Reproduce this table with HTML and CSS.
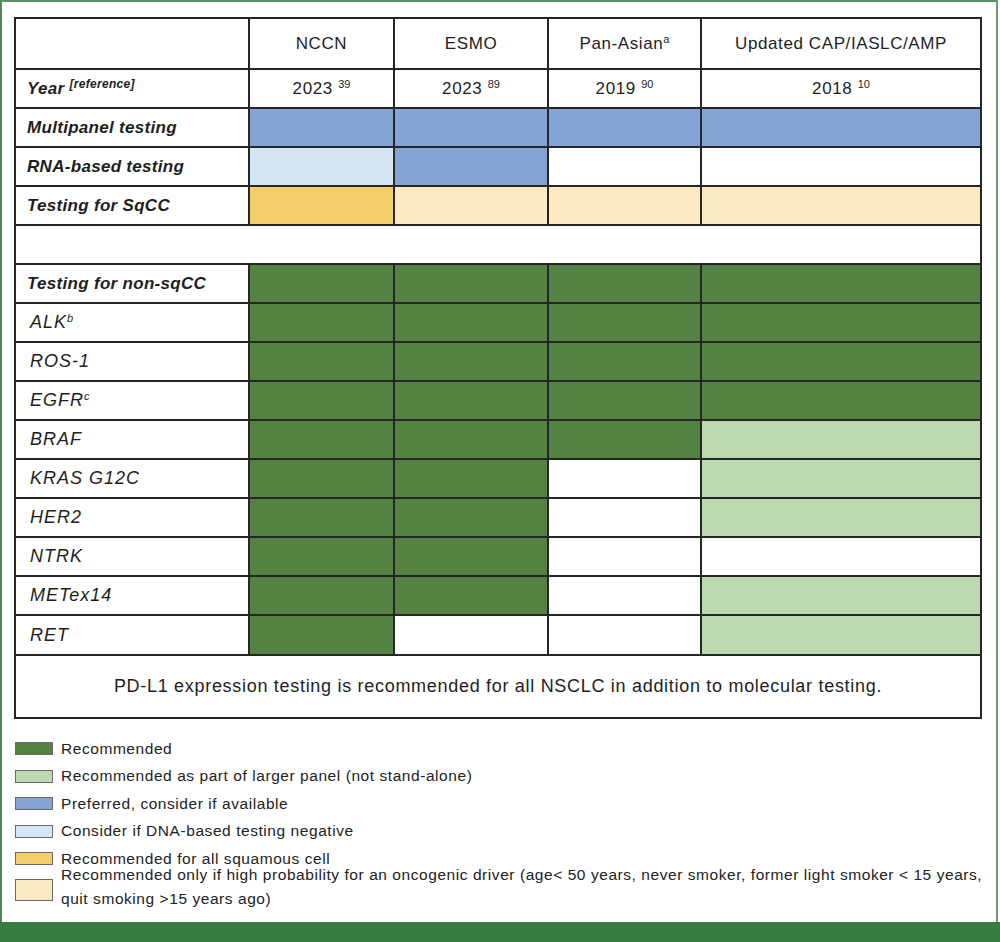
FILE: index.html
```html
<!DOCTYPE html>
<html>
<head>
<meta charset="utf-8">
<link rel="stylesheet" href="styles.css">
</head>
<body>
<div class="frame">
  <div class="content">
    <table class="grid">
      <colgroup>
        <col class="c1"><col class="c2"><col class="c3"><col class="c4"><col class="c5">
      </colgroup>
      <tr class="head">
        <td></td>
        <td class="hd">NCCN</td>
        <td class="hd">ESMO</td>
        <td class="hd">Pan-Asian<sup class="sa">a</sup></td>
        <td class="hd">Updated CAP/IASLC/AMP</td>
      </tr>
      <tr>
        <td class="lb">Year <sup class="ref">[reference]</sup></td>
        <td class="hd">2023 <sup class="yr">39</sup></td>
        <td class="hd">2023 <sup class="yr">89</sup></td>
        <td class="hd">2019 <sup class="yr">90</sup></td>
        <td class="hd">2018 <sup class="yr">10</sup></td>
      </tr>
      <tr>
        <td class="lb">Multipanel testing</td>
        <td class="bl"></td><td class="bl"></td><td class="bl"></td><td class="bl"></td>
      </tr>
      <tr>
        <td class="lb">RNA-based testing</td>
        <td class="lbl"></td><td class="bl"></td><td></td><td></td>
      </tr>
      <tr>
        <td class="lb">Testing for SqCC</td>
        <td class="gd"></td><td class="cr"></td><td class="cr"></td><td class="cr"></td>
      </tr>
      <tr>
        <td colspan="5"></td>
      </tr>
      <tr>
        <td class="lb">Testing for non-sqCC</td>
        <td class="dg"></td><td class="dg"></td><td class="dg"></td><td class="dg"></td>
      </tr>
      <tr>
        <td class="gn">ALK<sup class="gs">b</sup></td>
        <td class="dg"></td><td class="dg"></td><td class="dg"></td><td class="dg"></td>
      </tr>
      <tr>
        <td class="gn">ROS-1</td>
        <td class="dg"></td><td class="dg"></td><td class="dg"></td><td class="dg"></td>
      </tr>
      <tr>
        <td class="gn">EGFR<sup class="gs">c</sup></td>
        <td class="dg"></td><td class="dg"></td><td class="dg"></td><td class="dg"></td>
      </tr>
      <tr>
        <td class="gn">BRAF</td>
        <td class="dg"></td><td class="dg"></td><td class="dg"></td><td class="lg"></td>
      </tr>
      <tr>
        <td class="gn">KRAS G12C</td>
        <td class="dg"></td><td class="dg"></td><td></td><td class="lg"></td>
      </tr>
      <tr>
        <td class="gn">HER2</td>
        <td class="dg"></td><td class="dg"></td><td></td><td class="lg"></td>
      </tr>
      <tr>
        <td class="gn">NTRK</td>
        <td class="dg"></td><td class="dg"></td><td></td><td></td>
      </tr>
      <tr>
        <td class="gn">METex14</td>
        <td class="dg"></td><td class="dg"></td><td></td><td class="lg"></td>
      </tr>
      <tr class="last">
        <td class="gn">RET</td>
        <td class="dg"></td><td></td><td></td><td class="lg"></td>
      </tr>
      <tr class="note">
        <td colspan="5">PD-L1 expression testing is recommended for all NSCLC in addition to molecular testing.</td>
      </tr>
    </table>

    <ul class="legend">
      <li><span class="sw dg"></span><span class="lt">Recommended</span></li>
      <li><span class="sw lg"></span><span class="lt">Recommended as part of larger panel (not stand-alone)</span></li>
      <li><span class="sw bl"></span><span class="lt">Preferred, consider if available</span></li>
      <li><span class="sw lbl"></span><span class="lt">Consider if DNA-based testing negative</span></li>
      <li><span class="sw gd"></span><span class="lt">Recommended for all squamous cell</span></li>
      <li class="two"><span class="sw tall cr"></span><span class="lt">Recommended only if high probability for an oncogenic driver (age&lt; 50 years, never smoker, former light smoker &lt; 15 years,<br>quit smoking &gt;15 years ago)</span></li>
    </ul>
  </div>
  <div class="bar"></div>
</div>
</body>
</html>
```

FILE: styles.css
```css
html, body {
  margin: 0;
  padding: 0;
  background: #ffffff;
}

.frame {
  width: 1000px;
  height: 942px;
  box-sizing: border-box;
  display: flex;
  flex-direction: column;
}

.content {
  flex: 1;
  border-top: 2px solid #5a9160;
  border-left: 2px solid #4e8a55;
  border-right: 2px solid #6a9d6e;
  margin-right: 2px;
  padding: 15px 0 0 12px;
}

.grid {
  border-collapse: collapse;
  table-layout: fixed;
  width: 966px;
  font-family: "Liberation Sans", Arial, sans-serif;
  color: #1e1e1e;
}

.grid td {
  border: 2px solid #262626;
  height: 37px;
  padding: 0;
}

.c1 { width: 234px; }
.c2 { width: 145px; }
.c3 { width: 154px; }
.c4 { width: 153px; }
.c5 { width: 280px; }

.grid tr.head td { height: 49px; }
.grid tr.last td { height: 38px; }

.hd {
  text-align: center;
  font-size: 17px;
  letter-spacing: 0.6px;
}

.lb {
  font-weight: 700;
  font-style: italic;
  font-size: 17px;
  padding-left: 11px !important;
  letter-spacing: 0.3px;
}

.gn {
  font-style: italic;
  font-size: 18px;
  padding-left: 14px !important;
  letter-spacing: 1px;
}

sup {
  line-height: 0;
}

.sa { font-size: 11px; vertical-align: 6px; letter-spacing: 0; }
.yr { font-size: 11px; vertical-align: 6px; letter-spacing: 0; }
.ref { font-size: 12px; vertical-align: 6px; font-weight: 700; font-style: italic; letter-spacing: 0.3px; }
.gs { font-size: 11px; vertical-align: 6px; font-style: italic; letter-spacing: 0; }

.dg { background: #548242; }
.lg { background: #bcd9b1; }
.bl { background: #84a4d6; }
.lbl { background: #d6e5f2; }
.gd { background: #f2cf6a; }
.cr { background: #fbe9c1; }

.grid tr.note td {
  height: 61px;
  text-align: center;
  font-size: 18px;
  letter-spacing: 0.7px;
  color: #1e1e1e;
}

.legend {
  list-style: none;
  margin: 16px 0 0 0;
  padding: 0;
  font-family: "Liberation Sans", Arial, sans-serif;
  font-size: 15.5px;
  letter-spacing: 0.56px;
  color: #222;
}

.legend li {
  display: flex;
  align-items: center;
  gap: 8px;
  height: 27.5px;
  margin-left: 1px;
}

.legend li.two {
  align-items: center;
  height: 48px;
  line-height: 24px;
  margin-top: -10px;
}

.sw {
  flex: none;
  width: 36px;
  height: 11px;
  border: 1px solid #6a6a6a;
}

.sw.tall {
  height: 20px;
  margin-top: 6px;
}

.lt {
  flex: 1;
}

.bar {
  height: 20px;
  background: #377c40;
  flex: none;
}
```
